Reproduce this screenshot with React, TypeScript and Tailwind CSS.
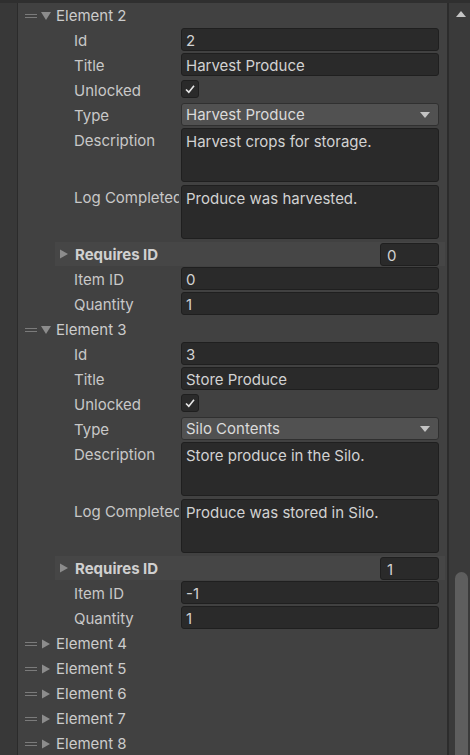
import React from 'react';

type Item = {
    id: string;
    title: string;
    type: string;
    description: string;
    log: string;
    requires: string;
    itemId: string;
    quantity: string;
};

const items: Item[] = [
    {
        id: "2",
        title: "Harvest Produce",
        type: "Harvest Produce",
        description: "Harvest crops for storage.",
        log: "Produce was harvested.",
        requires: "0",
        itemId: "0",
        quantity: "1",
    },
    {
        id: "3",
        title: "Store Produce",
        type: "Silo Contents",
        description: "Store produce in the Silo.",
        log: "Produce was stored in Silo.",
        requires: "1",
        itemId: "-1",
        quantity: "1",
    },
];

const Handle = () => (
    <div className="w-[12px] flex flex-col gap-[2px] mr-[4px]">
        <div className="h-[1px] bg-[#7b7b7b]" />
        <div className="h-[1px] bg-[#7b7b7b]" />
    </div>
);

const Arrow = ({ open, className }: { open: boolean; className?: string }) => (
    <svg width="10" height="10" viewBox="0 0 10 10" className={className ?? "mr-[5px]"}>
        {open ? <polygon points="0,1 10,1 5,9" fill="#8c8c8c" /> : <polygon points="1,0.5 9,5 1,9.5" fill="#8c8c8c" />}
    </svg>
);

const Label = ({ children }: { children: React.ReactNode }) => (
    <div className="w-[105px] pl-[56px] mr-[2px] pt-[2px] box-content shrink-0 overflow-hidden whitespace-nowrap text-[#c8c8c8]">{children}</div>
);

const Field = ({ value }: { value: string }) => (
    <div className="flex-1 h-[23px] rounded-[3px] border border-[#1f1f1f] bg-[#2a2a2a] px-[4px] pt-[1px] leading-[21px] text-[#d2d2d2]">{value}</div>
);

const Row = ({ label, children }: { label: string; children: React.ReactNode }) => (
    <div className="h-[25px] flex items-start pr-[8px]">
        <Label>{label}</Label>
        {children}
    </div>
);

const Area = ({ label, value }: { label: string; value: string }) => (
    <div className="h-[57px] flex items-start pr-[8px]">
        <Label>{label}</Label>
        <div className="flex-1 h-[54px] rounded-[3px] border border-[#1f1f1f] bg-[#2a2a2a] px-[4px] pt-[2px] leading-[21px] text-[#d2d2d2]">{value}</div>
    </div>
);

const Element = ({ name, item }: { name: string; item?: Item }) => (
    <>
        <div className="h-[25px] flex items-center pl-[7px]">
            <Handle />
            <Arrow open={!!item} />
            <span className="pt-[2px] text-[#cccccc]">{name}</span>
        </div>
        {item && (
            <>
                <Row label="Id"><Field value={item.id} /></Row>
                <Row label="Title"><Field value={item.title} /></Row>
                <Row label="Unlocked">
                    <div className="mt-[2px] w-[18px] h-[18px] rounded-[3px] border border-[#1f1f1f] bg-[#2a2a2a] flex items-center justify-center">
                        <svg width="12" height="12" viewBox="0 0 12 12">
                            <path d="M2 6.5 L4.8 9.2 L10 2.8" stroke="#e6e6e6" strokeWidth="1.6" fill="none" />
                        </svg>
                    </div>
                </Row>
                <Row label="Type">
                    <div className="flex-1 h-[23px] rounded-[3px] border border-[#303030] bg-[#515151] pl-[4px] pr-[8px] text-[#dadada] flex items-center justify-between">
                        <span className="pt-[2px]">{item.type}</span>
                        <svg width="10" height="6" viewBox="0 0 10 6"><polygon points="0,0 10,0 5,6" fill="#c4c4c4" /></svg>
                    </div>
                </Row>
                <Area label="Description" value={item.description} />
                <Area label="Log Completed" value={item.log} />
                <div className="h-[25px] pl-[37px] pr-[2px]">
                    <div className="h-[24px] bg-[#464646] flex items-center pl-[4px] pr-[6px]">
                        <Arrow open={false} className="mr-[6px]" />
                        <span className="pt-[2px] font-bold text-[#d0d0d0] flex-1">Requires ID</span>
                        <div className="w-[59px] h-[23px] rounded-[3px] border border-[#1f1f1f] bg-[#2a2a2a] px-[6px] pt-[1px] leading-[21px] text-[#d2d2d2]">{item.requires}</div>
                    </div>
                </div>
                <Row label="Item ID"><Field value={item.itemId} /></Row>
                <Row label="Quantity"><Field value={item.quantity} /></Row>
            </>
        )}
    </>
);

export default function App() {
    return (
        <div className="w-[470px] h-[755px] overflow-hidden bg-[#383838] flex flex-col text-[15px] font-['Inter',sans-serif]">
            <div className="h-[3px] bg-[#2f2f2f] shrink-0" />
            <div className="flex flex-1 min-h-0">
                <div className="w-[18px] bg-[#383838] border-r border-[#2b2b2b] shrink-0" />
                <div className="flex-1 bg-[#414141] overflow-hidden">
                    <Element name="Element 2" item={items[0]} />
                    <Element name="Element 3" item={items[1]} />
                    <Element name="Element 4" />
                    <Element name="Element 5" />
                    <Element name="Element 6" />
                    <Element name="Element 7" />
                    <Element name="Element 8" />
                </div>
                <div className="w-[23px] shrink-0 bg-[#3a3a3a] border-l-2 border-[#2c2c2c] flex flex-col items-center">
                    <svg width="10" height="6" viewBox="0 0 10 6" className="mt-[8px] ml-[3px]"><polygon points="5,0 10,6 0,6" fill="#c4c4c4" /></svg>
                    <div className="flex-1" />
                    <div className="w-[13px] h-[183px] ml-[3px] rounded-t-[7px] bg-[#5e5e5e]" />
                </div>
            </div>
        </div>
    );
}
